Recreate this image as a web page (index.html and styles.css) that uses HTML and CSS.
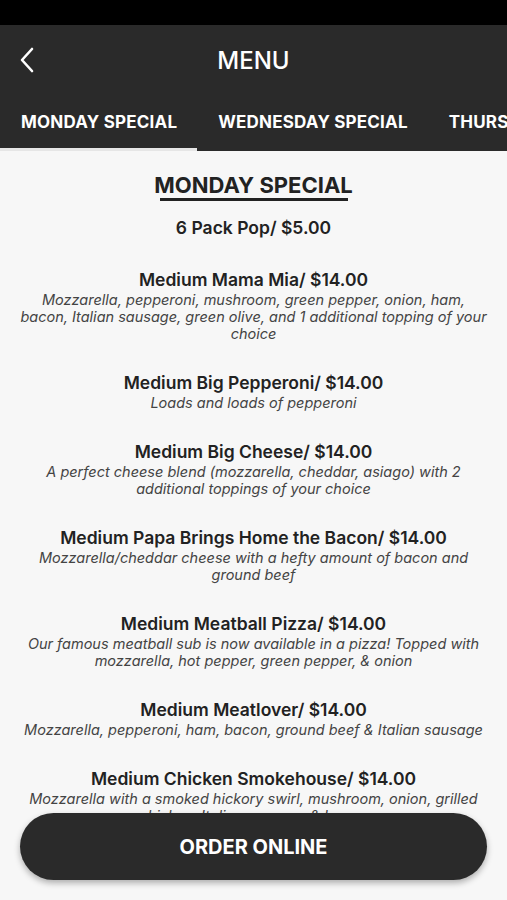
FILE: index.html
```html
<!DOCTYPE html>
<html lang="en">
<head>
  <meta charset="UTF-8">
  <meta name="viewport" content="width=device-width, initial-scale=1.0">
  <title>Menu</title>
  <link rel="stylesheet" href="styles.css">
</head>
<body>
  <div class="status-bar"></div>

  <header class="app-header">
    <div class="top-row">
      <a class="back" href="#">
        <svg width="16" height="26" viewBox="0 0 16 26">
          <path d="M13 2 L3 13 L13 24" fill="none" stroke="#ffffff" stroke-width="2.6" stroke-linecap="round" stroke-linejoin="round"/>
        </svg>
      </a>
      <div class="title">MENU</div>
    </div>
    <nav class="tabs">
      <a class="tab active" href="#">MONDAY SPECIAL</a>
      <a class="tab" href="#">WEDNESDAY SPECIAL</a>
      <a class="tab" href="#">THURSDAY SPECIAL</a>
    </nav>
  </header>

  <main class="menu">
    <h2 class="menu-heading">MONDAY SPECIAL</h2>
    <div class="heading-rule"></div>

    <div class="item">
      <div class="item-name">6 Pack Pop/ $5.00</div>
    </div>

    <div class="item">
      <div class="item-name">Medium Mama Mia/ $14.00</div>
      <div class="item-desc">Mozzarella, pepperoni, mushroom, green pepper, onion, ham, bacon, Italian sausage, green olive, and 1 additional topping of your choice</div>
    </div>

    <div class="item">
      <div class="item-name">Medium Big Pepperoni/ $14.00</div>
      <div class="item-desc">Loads and loads of pepperoni</div>
    </div>

    <div class="item">
      <div class="item-name">Medium Big Cheese/ $14.00</div>
      <div class="item-desc">A perfect cheese blend (mozzarella, cheddar, asiago) with 2 additional toppings of your choice</div>
    </div>

    <div class="item">
      <div class="item-name">Medium Papa Brings Home the Bacon/ $14.00</div>
      <div class="item-desc">Mozzarella/cheddar cheese with a hefty amount of bacon and ground beef</div>
    </div>

    <div class="item">
      <div class="item-name">Medium Meatball Pizza/ $14.00</div>
      <div class="item-desc">Our famous meatball sub is now available in a pizza! Topped with mozzarella, hot pepper, green pepper, &amp; onion</div>
    </div>

    <div class="item">
      <div class="item-name">Medium Meatlover/ $14.00</div>
      <div class="item-desc">Mozzarella, pepperoni, ham, bacon, ground beef &amp; Italian sausage</div>
    </div>

    <div class="item">
      <div class="item-name">Medium Chicken Smokehouse/ $14.00</div>
      <div class="item-desc">Mozzarella with a smoked hickory swirl, mushroom, onion, grilled chicken, Italian sausage &amp; bacon</div>
    </div>
  </main>

  <a class="order-btn" href="#">ORDER ONLINE</a>
</body>
</html>
```

FILE: styles.css
```css
body {
  margin: 0;
  padding: 0;
  font-family: Inter, "Noto Sans", sans-serif;
  background-color: #f7f7f7;
  color: #222222;
  height: 900px;
  overflow: hidden;
  position: relative;
}

.status-bar {
  height: 25px;
  background-color: #000000;
}

.app-header {
  background-color: #2a2a2a;
  color: #ffffff;
}

.top-row {
  height: 70px;
  display: flex;
  align-items: center;
  justify-content: center;
  position: relative;
}

.back {
  position: absolute;
  left: 19px;
  top: 22px;
  display: flex;
}

.title {
  font-size: 24px;
  font-weight: 500;
}

.tabs {
  display: flex;
  white-space: nowrap;
  overflow: hidden;
}

.tab {
  color: #ffffff;
  text-decoration: none;
  font-weight: 700;
  font-size: 17px;
  letter-spacing: 0.2px;
  line-height: 22px;
  padding: 16px 20px 15px 21px;
  border-bottom: 3px solid transparent;
}

.tab.active {
  border-bottom-color: #e6e6e6;
}

.menu {
  display: flex;
  flex-direction: column;
  align-items: center;
  text-align: center;
  padding: 21px 20px 0;
}

.menu-heading {
  margin: 0;
  font-size: 22px;
  font-weight: 700;
  line-height: 26px;
}

.heading-rule {
  width: 188px;
  height: 3px;
  background-color: #222222;
}

.item {
  margin-top: 16px;
}

.item + .item {
  margin-top: 30px;
}

.item-name {
  font-size: 17.5px;
  font-weight: 600;
  line-height: 22px;
}

.item-desc {
  font-size: 14.5px;
  font-style: italic;
  color: #444444;
  line-height: 17px;
}

.order-btn {
  position: absolute;
  left: 20px;
  right: 20px;
  top: 813px;
  height: 67px;
  border-radius: 34px;
  background-color: #2a2a2a;
  color: #ffffff;
  text-decoration: none;
  font-weight: 700;
  font-size: 20px;
  display: flex;
  align-items: center;
  justify-content: center;
  box-shadow: 0 3px 6px rgba(0, 0, 0, 0.3);
}
```
